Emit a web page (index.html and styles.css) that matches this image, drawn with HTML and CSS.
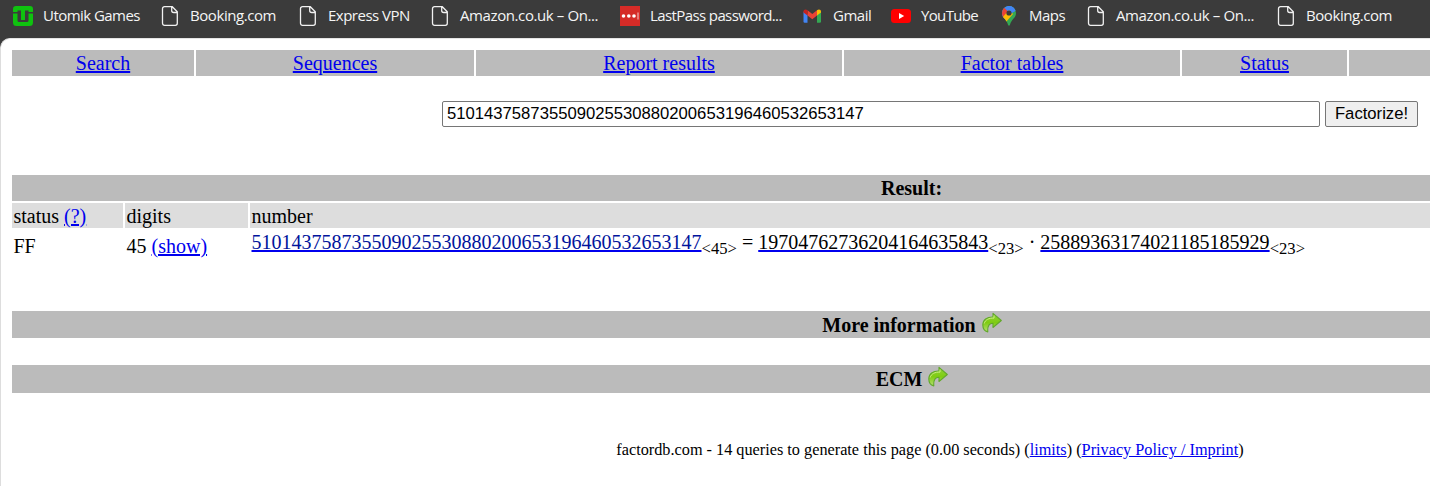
FILE: index.html
```html
<!DOCTYPE html>
<html lang="en">
<head>
<meta charset="utf-8">
<title>factordb.com</title>
<link rel="stylesheet" href="styles.css">
</head>
<body>
<svg class="defs" width="0" height="0">
  <defs>
    <linearGradient id="green" x1="0" y1="0" x2="0" y2="1"><stop offset="0" stop-color="#8fd43a"/><stop offset=".5" stop-color="#7fcc12"/><stop offset="1" stop-color="#b5df72"/></linearGradient>
    <symbol id="file" viewBox="0 0 20 20"><path d="M4.5.7h7.8l5 5v11.6a2 2 0 0 1-2 2H4.500a2 2 0 0 1-2-2V2.700a2 2 0 0 1 2-2zM11.700.9v3.600a2 2 0 0 0 2 2h3.500" fill="none" stroke="#f1f1f1" stroke-width="1.300"/></symbol>
    <symbol id="arrow" viewBox="0 0 20 20"><path d="M11 .8 19.300 8l-8.300 7v-4.300C7.500 10.500 5.300 13 5.800 19.400 2.500 18.500.8 16 .8 12.500.8 7.500 5 4.300 11 4.500z" fill="url(#green)" stroke="#62a82c" stroke-width="1.100" stroke-linejoin="round"/><path d="M12 3v2.600C7 5.300 3 7.500 2.200 11" fill="none" stroke="#ccec83" stroke-width="1"/></symbol>
  </defs>
</svg>
<nav class="bookmarks">
  <div class="bm utomik"><svg viewBox="0 0 20 20"><g fill="#0fc20f"><path d="M3 0h14a3 3 0 0 1 3 3v3h-4.500V4.500H12V14H8V4.500H4.500V6H0V3a3 3 0 0 1 3-3z"/><path d="M0 7.500h4.500v7q0 1.500 1.500 1.500h8q1.500 0 1.500-1.500v-7H20v9a3.500 3.500 0 0 1-3.500 3.500h-13A3.500 3.500 0 0 1 0 16.500z"/></g></svg><span>Utomik Games</span></div>
  <div class="bm booking"><svg><use href="#file"/></svg><span>Booking.com</span></div>
  <div class="bm express"><svg><use href="#file"/></svg><span>Express VPN</span></div>
  <div class="bm amazon"><svg><use href="#file"/></svg><span>Amazon.co.uk – On...</span></div>
  <div class="bm lastpass"><svg viewBox="0 0 20 20"><path d="M0 0h20v20H0z" fill="#d52b27"/><g fill="#fff"><circle cx="3.500" cy="10" r="1.800"/><circle cx="8.800" cy="10" r="1.800"/><circle cx="14" cy="10" r="1.800"/><path d="M17.500 6.500h1v7h-1z" opacity=".75"/></g></svg><span>LastPass password...</span></div>
  <div class="bm gmail"><svg viewBox="0 0 20 20"><path d="M.5 5.500v10q0 1.200 1.200 1.200H4.500V8z" fill="#4285f4"/><path d="M14 8v8.700h2.800q1.200 0 1.200-1.200v-10z" fill="#34a853"/><path d="M4.500 4.300l4.800 3.800L14 4.300v5.100l-4.700 3.800-4.800-3.800z" fill="#ea4335"/><path d="M.5 5.500c0-2.100 2.300-2.700 4-1.200v5.100l-4-2.900z" fill="#c5221f"/><path d="M18 5.500c0-2.100-2.300-2.700-4-1.200v5.100l4-2.900z" fill="#fbbc04"/></svg><span>Gmail</span></div>
  <div class="bm youtube"><svg viewBox="0 0 20 20"><rect y="3" width="20" height="14" rx="3.500" fill="#f00"/><path d="M8 7l5.200 3L8 13z" fill="#fff"/></svg><span>YouTube</span></div>
  <div class="bm maps"><svg viewBox="0 0 20 20"><clipPath id="pin"><path d="M10 0a7 7 0 0 1 7 7c0 5-4.500 6-6 11.700q-1 2-2 0C7.500 13 3 12 3 7a7 7 0 0 1 7-7z"/></clipPath><g clip-path="url(#pin)"><path d="M0 0h20v20H0z" fill="#34a853"/><path d="M3 0h14L6 13H0z" fill="#4285f4"/><path d="M2 2l3-.5 5 5L4 13H0z" fill="#ea4335"/><path d="M3 12 10 4l4 4-7 8z" fill="#fbbc04"/><path d="M8 0h11v3.500l-7 4z" fill="#4285f4"/></g><circle cx="10" cy="7" r="2.600" fill="#3b3b3b"/></svg><span>Maps</span></div>
  <div class="bm amazon"><svg><use href="#file"/></svg><span>Amazon.co.uk – On...</span></div>
  <div class="bm booking"><svg><use href="#file"/></svg><span>Booking.com</span></div>
</nav>
<main class="page">
  <div class="menu"><div><a href="#">Search</a></div><div><a href="#">Sequences</a></div><div><a href="#">Report results</a></div><div><a href="#">Factor tables</a></div><div><a href="#">Status</a></div><div></div></div>
  <form class="query"><input type="text" value="510143758735509025530880200653196460532653147"><button type="button">Factorize!</button></form>
  <section class="result">
    <h2 class="bar">Result:</h2>
    <div class="row head"><div>status <a href="#">(?)</a></div><div>digits</div><div>number</div></div>
    <div class="row"><div>FF</div><div>45 <a href="#">(show)</a></div><div class="number"><a class="whole" href="#">510143758735509025530880200653196460532653147</a><sub>&lt;45&gt;</sub> = <a class="prime" href="#">19704762736204164635843</a><sub>&lt;23&gt;</sub> · <a class="prime" href="#">25889363174021185185929</a><sub>&lt;23&gt;</sub></div></div>
  </section>
  <h2 class="bar more">More information <svg><use href="#arrow"/></svg></h2>
  <h2 class="bar ecm">ECM <svg><use href="#arrow"/></svg></h2>
  <footer>factordb.com - 14 queries to generate this page (0.00 seconds) (<a href="#">limits</a>) (<a href="#">Privacy Policy / Imprint</a>)</footer>
</main>
</body>
</html>
```
FILE: styles.css
```css
* { box-sizing: border-box; }
body { margin: 0; height: 486px; overflow: hidden; background: #3b3b3b; font: 20px/24px "Liberation Serif", "Times New Roman", serif; color: #000; }
.defs { display: block; height: 0; }
a { color: #0000ee; text-decoration: underline; }
.bookmarks { display: flex; height: 38px; padding: 6px 0 0 13px; overflow: hidden; color: #f5f5f5; font: 15px/19px "Open Sans", "Noto Sans", sans-serif; white-space: nowrap; }
.bm { display: flex; flex: none; gap: 10px; height: 20px; }
.bm svg { width: 20px; height: 20px; flex: none; }
.utomik { width: 147px; letter-spacing: -.55px; }
.booking { width: 138px; letter-spacing: -.43px; }
.express { width: 132px; letter-spacing: -.5px; }
.amazon { width: 190px; letter-spacing: -.4px; }
.lastpass { width: 183px; letter-spacing: -.6px; }
.gmail { width: 88px; letter-spacing: -.5px; }
.youtube { width: 108px; letter-spacing: -.65px; }
.maps { width: 87px; letter-spacing: -.5px; }
.page { height: 448px; padding: 11px 0 0 11px; overflow: hidden; background: #fff; border-left: 1px solid #ddd; border-top: 1px solid #e4e4e4; border-radius: 10px 0 0 0; }
.menu { display: grid; grid-template-columns: 182px 278px 366px 336px 165px 1fr; column-gap: 2px; height: 26px; text-align: center; line-height: 26px; }
.menu div { background: #bbb; }
.query { display: flex; gap: 5px; margin: 25px 0 0 430px; height: 26px; }
.query input, .query button { height: 26px; border: 1px solid #767676; border-radius: 2px; font: 16.667px "Liberation Sans", Arial, sans-serif; color: #000; }
.query input { width: 878px; padding: 0 4px; background: #fff; }
.query button { width: 93px; padding: 0; background: #efefef; }
.result { margin-top: 48px; }
.bar { width: 1799px; margin: 0; height: 26px; background: #bbb; font-size: 20px; font-weight: bold; line-height: 26px; text-align: center; }
.row { display: grid; grid-template-columns: 111px 123px 1fr; column-gap: 2px; margin-top: 2px; height: 27px; line-height: 32px; }
.row > div { padding-left: 1.500px; white-space: nowrap; }
.head { height: 25px; line-height: 26px; }
.head > div { height: 25px; background: #ddd; }
.row > .number { line-height: 25px; }
.head > .number { line-height: 26px; }
.number sub { font-size: 16.667px; line-height: 0; }
.number .whole, .number .prime { text-decoration-color: #0000ee; }
.whole { color: #00139c; }
.prime { color: #000; }
.bar svg { display: inline-block; width: 20px; height: 21px; margin: 0 -1px 0 1px; vertical-align: -1px; }
.more { margin-top: 54px; height: 27px; line-height: 29px; }
.ecm { margin-top: 27px; height: 28px; line-height: 29px; }
footer { width: 1836px; margin-top: 45px; font-size: 16.25px; line-height: 24px; text-align: center; }
```
